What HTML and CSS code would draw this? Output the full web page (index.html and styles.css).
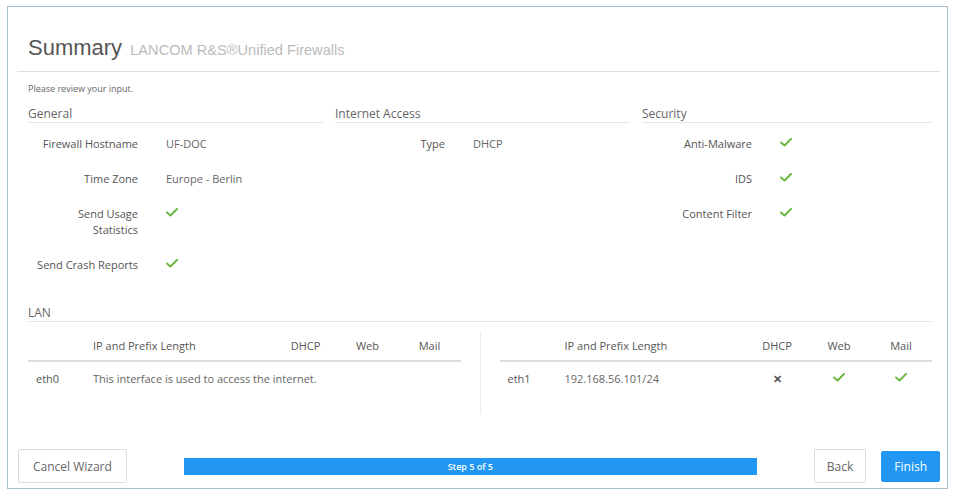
FILE: index.html
```html
<!DOCTYPE html>
<html lang="en">
<head>
  <meta charset="UTF-8">
  <title>Summary - Setup Wizard</title>
  <link rel="stylesheet" href="styles.css">
</head>
<body>
  <div class="wizard">
    <div class="wizard-head">
      <h1>Summary <small>LANCOM R&amp;S®Unified Firewalls</small></h1>
    </div>

    <div class="wizard-body">
      <p class="hint">Please review your input.</p>

      <div class="sections">
        <section>
          <h2>General</h2>
          <dl class="props">
            <dt>Firewall Hostname</dt><dd>UF-DOC</dd>
            <dt>Time Zone</dt><dd>Europe - Berlin</dd>
            <dt>Send Usage<br>Statistics</dt><dd><svg class="check" viewBox="0 0 12 9"><polyline points="1,4.5 4.5,7.5 11,1"/></svg></dd>
            <dt>Send Crash Reports</dt><dd><svg class="check" viewBox="0 0 12 9"><polyline points="1,4.5 4.5,7.5 11,1"/></svg></dd>
          </dl>
        </section>
        <section>
          <h2>Internet Access</h2>
          <dl class="props">
            <dt>Type</dt><dd>DHCP</dd>
          </dl>
        </section>
        <section>
          <h2>Security</h2>
          <dl class="props">
            <dt>Anti-Malware</dt><dd><svg class="check" viewBox="0 0 12 9"><polyline points="1,4.5 4.5,7.5 11,1"/></svg></dd>
            <dt>IDS</dt><dd><svg class="check" viewBox="0 0 12 9"><polyline points="1,4.5 4.5,7.5 11,1"/></svg></dd>
            <dt>Content Filter</dt><dd><svg class="check" viewBox="0 0 12 9"><polyline points="1,4.5 4.5,7.5 11,1"/></svg></dd>
          </dl>
        </section>
      </div>

      <h2>LAN</h2>
      <div class="lan">
        <table class="iface">
          <colgroup><col class="c-name"><col><col class="c-flag"><col class="c-flag"><col class="c-flag"></colgroup>
          <thead>
            <tr><th></th><th class="left">IP and Prefix Length</th><th>DHCP</th><th>Web</th><th>Mail</th></tr>
          </thead>
          <tbody>
            <tr><td class="name">eth0</td><td class="left" colspan="4">This interface is used to access the internet.</td></tr>
          </tbody>
        </table>
        <div class="divider"></div>
        <table class="iface">
          <colgroup><col class="c-name"><col><col class="c-flag"><col class="c-flag"><col class="c-flag"></colgroup>
          <thead>
            <tr><th></th><th class="left">IP and Prefix Length</th><th>DHCP</th><th>Web</th><th>Mail</th></tr>
          </thead>
          <tbody>
            <tr>
              <td class="name">eth1</td>
              <td class="left">192.168.56.101/24</td>
              <td><span class="cross">✕</span></td>
              <td><svg class="check" viewBox="0 0 12 9"><polyline points="1,4.5 4.5,7.5 11,1"/></svg></td>
              <td><svg class="check" viewBox="0 0 12 9"><polyline points="1,4.5 4.5,7.5 11,1"/></svg></td>
            </tr>
          </tbody>
        </table>
      </div>
    </div>

    <div class="wizard-foot">
      <button class="btn cancel">Cancel Wizard</button>
      <div class="progress"><div class="bar" style="width:100%">Step 5 of 5</div></div>
      <button class="btn">Back</button>
      <button class="btn primary">Finish</button>
    </div>
  </div>
</body>
</html>
```

FILE: styles.css
```css
body {
  margin: 6px 6px 0 7px;
  font-family: "Open Sans", "Noto Sans", sans-serif;
  color: #555;
  background: #fff;
}
.wizard {
  box-sizing: border-box;
  height: 483px;
  display: flex;
  flex-direction: column;
  border: 1px solid #a9bfcd;
  box-shadow: 0 0 4px rgba(110, 200, 235, 0.55);
  padding: 0 7px 0 9px;
}
.wizard-head {
  padding: 28px 0 8px 11px;
  border-bottom: 1px solid #dcdcdc;
}
h1 {
  margin: 0;
  font-family: "Liberation Sans", Arial, sans-serif;
  font-weight: normal;
  font-size: 22px;
  line-height: 26px;
  color: #555;
}
h1 small {
  font-size: 14.6px;
  color: #bbb;
  margin-left: 2px;
}
.wizard-body {
  flex: 1;
  padding: 0 8px 0 11px;
}
.hint {
  margin: 10px 0 0;
  font-size: 9px;
  line-height: 14px;
  color: #666;
}
h2 {
  margin: 0;
  font-size: 12px;
  font-weight: normal;
  line-height: 16px;
  color: #666;
  border-bottom: 1px solid #e6e6e6;
}
.sections {
  display: grid;
  grid-template-columns: 295px 295px 1fr;
  gap: 12px;
  margin-top: 10px;
}
.props {
  display: grid;
  grid-template-columns: 110px 1fr;
  column-gap: 28px;
  row-gap: 19px;
  margin: 13px 0 0;
  font-size: 11px;
  line-height: 16px;
}
.props dt {
  text-align: right;
  color: #555;
}
.props dd {
  margin: 0;
  color: #666;
}
.check {
  width: 12px;
  height: 9px;
  fill: none;
  stroke: #6cb843;
  stroke-width: 2;
  stroke-linecap: round;
  stroke-linejoin: round;
  vertical-align: 1px;
}
.wizard-body > h2 {
  margin-top: 32px;
}
.lan {
  display: grid;
  grid-template-columns: 1fr 1px 1fr;
  column-gap: 19px;
  margin-top: 10px;
}
.divider {
  background: #ececec;
}
.iface {
  width: 100%;
  border-collapse: collapse;
  table-layout: fixed;
  font-size: 11px;
  line-height: 16px;
  margin-bottom: 18px;
}
.c-name { width: 58px; }
.c-flag { width: 62px; }
.iface th {
  font-weight: normal;
  color: #555;
  padding: 6px 0;
  border-bottom: 2px solid #dedede;
  text-align: center;
}
.iface td {
  padding: 9px 0;
  text-align: center;
  color: #666;
}
.iface .left { text-align: left; padding-left: 7px; }
.iface .name { text-align: left; padding-left: 8px; color: #555; }
.cross {
  font-size: 11px;
  font-weight: bold;
  color: #555;
}
.wizard-foot {
  display: flex;
  align-items: center;
  padding: 0 0 5px 1px;
}
.btn {
  font-family: "Open Sans", "Noto Sans", sans-serif;
  font-size: 12px;
  color: #666;
  background: #fff;
  border: 1px solid #dcdcdc;
  border-radius: 2px;
  height: 34px;
  padding: 0 12px;
}
.btn.cancel {
  padding: 0 14px;
}
.btn.primary {
  background: #2196f3;
  border-color: #2196f3;
  color: #fff;
  height: 31px;
  margin-left: 15px;
}
.progress {
  flex: 1;
  margin: 0 57px;
  height: 17px;
  background: #eee;
}
.progress .bar {
  height: 100%;
  background: #2196f3;
  color: #fff;
  font-size: 9px;
  line-height: 17px;
  text-align: center;
  font-weight: 600;
}
```
